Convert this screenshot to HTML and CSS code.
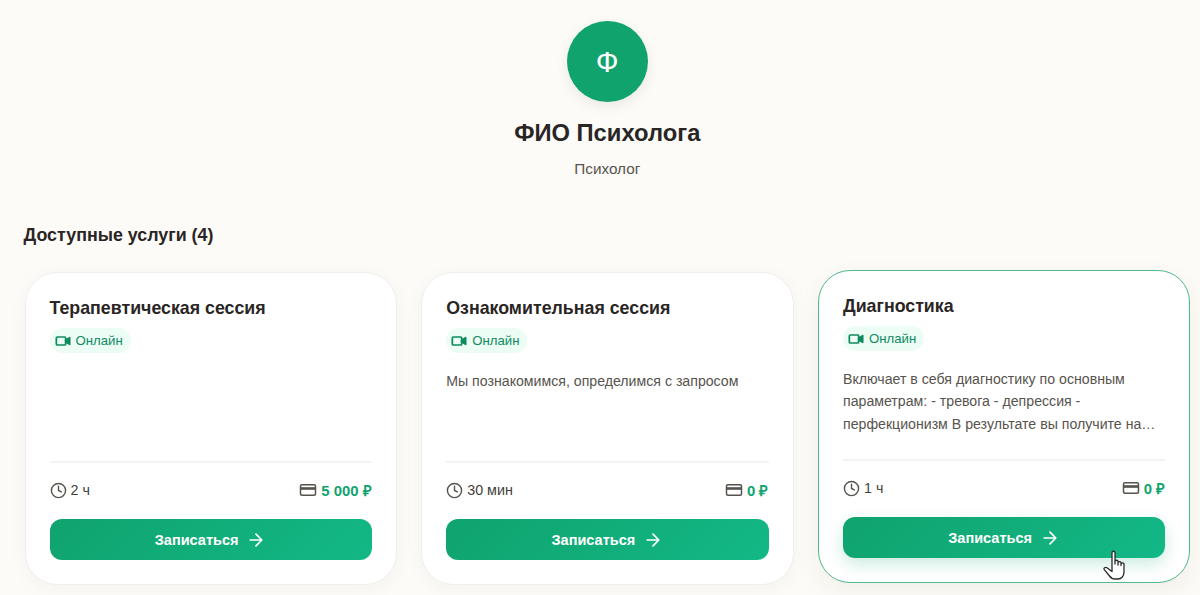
FILE: index.html
```html
<!DOCTYPE html>
<html lang="ru">
<head>
<meta charset="utf-8">
<title>ФИО Психолога</title>
<link rel="stylesheet" href="styles.css">
</head>
<body>
<main class="page">
  <header class="profile">
    <div class="avatar">Ф</div>
    <h1 class="name">ФИО Психолога</h1>
    <p class="role">Психолог</p>
  </header>
  <h2 class="section-title">Доступные услуги (4)</h2>
  <section class="grid">
    <article class="card">
      <h3 class="card-title">Терапевтическая сессия</h3>
      <span class="badge"><svg class="ico-video" viewBox="0 0 24 24" fill="none" stroke="currentColor" stroke-width="2.6"><rect x="2" y="6" width="14" height="12" rx="1.5"/><path d="M16 10.5 22 7v10l-6-3.5z" fill="currentColor" stroke-linejoin="round"/></svg>Онлайн</span>
      <p class="desc"></p>
      <div class="meta">
        <span class="meta-item"><svg class="ico" viewBox="0 0 24 24" fill="none" stroke="currentColor" stroke-width="2" stroke-linecap="round"><circle cx="12" cy="12" r="10"/><path d="M12 6v6l4 2"/></svg>2 ч</span>
        <span class="meta-item"><svg class="ico-card" viewBox="0 0 24 24" fill="none" stroke="currentColor" stroke-width="2"><rect x="2" y="5" width="20" height="14" rx="2"/><path d="M2 10h20" stroke-width="3.5"/></svg><b class="price">5 000 ₽</b></span>
      </div>
      <button class="btn">Записаться<svg class="ico-arrow" viewBox="0 0 24 24" fill="none" stroke="currentColor" stroke-width="2" stroke-linecap="round" stroke-linejoin="round"><path d="M5 12h14M12 5l7 7-7 7"/></svg></button>
    </article>
    <article class="card">
      <h3 class="card-title">Ознакомительная сессия</h3>
      <span class="badge"><svg class="ico-video" viewBox="0 0 24 24" fill="none" stroke="currentColor" stroke-width="2.6"><rect x="2" y="6" width="14" height="12" rx="1.5"/><path d="M16 10.5 22 7v10l-6-3.5z" fill="currentColor" stroke-linejoin="round"/></svg>Онлайн</span>
      <p class="desc">Мы познакомимся, определимся с запросом</p>
      <div class="meta">
        <span class="meta-item"><svg class="ico" viewBox="0 0 24 24" fill="none" stroke="currentColor" stroke-width="2" stroke-linecap="round"><circle cx="12" cy="12" r="10"/><path d="M12 6v6l4 2"/></svg>30 мин</span>
        <span class="meta-item"><svg class="ico-card" viewBox="0 0 24 24" fill="none" stroke="currentColor" stroke-width="2"><rect x="2" y="5" width="20" height="14" rx="2"/><path d="M2 10h20" stroke-width="3.5"/></svg><b class="price">0 ₽</b></span>
      </div>
      <button class="btn">Записаться<svg class="ico-arrow" viewBox="0 0 24 24" fill="none" stroke="currentColor" stroke-width="2" stroke-linecap="round" stroke-linejoin="round"><path d="M5 12h14M12 5l7 7-7 7"/></svg></button>
    </article>
    <article class="card card-hover">
      <h3 class="card-title">Диагностика</h3>
      <span class="badge"><svg class="ico-video" viewBox="0 0 24 24" fill="none" stroke="currentColor" stroke-width="2.6"><rect x="2" y="6" width="14" height="12" rx="1.5"/><path d="M16 10.5 22 7v10l-6-3.5z" fill="currentColor" stroke-linejoin="round"/></svg>Онлайн</span>
      <p class="desc">Включает в себя диагностику по основным параметрам: - тревога - депрессия - перфекционизм В результате вы получите на…</p>
      <div class="meta">
        <span class="meta-item"><svg class="ico" viewBox="0 0 24 24" fill="none" stroke="currentColor" stroke-width="2" stroke-linecap="round"><circle cx="12" cy="12" r="10"/><path d="M12 6v6l4 2"/></svg>1 ч</span>
        <span class="meta-item"><svg class="ico-card" viewBox="0 0 24 24" fill="none" stroke="currentColor" stroke-width="2"><rect x="2" y="5" width="20" height="14" rx="2"/><path d="M2 10h20" stroke-width="3.5"/></svg><b class="price">0 ₽</b></span>
      </div>
      <button class="btn btn-hover">Записаться<svg class="ico-arrow" viewBox="0 0 24 24" fill="none" stroke="currentColor" stroke-width="2" stroke-linecap="round" stroke-linejoin="round"><path d="M5 12h14M12 5l7 7-7 7"/></svg></button>
      <svg class="cursor" viewBox="0 0 24 30" fill="#fff" stroke="#2b2b2b" stroke-width="1.3" stroke-linejoin="round" stroke-linecap="round"><path d="M9 2.8c0-2.1 3-2.1 3 0V14V11.5c0-1.7 3-1.7 3 0V15V12.8c0-1.6 3-1.6 3 0V15.5V14c0-1.5 3-1.5 3 0V22c0 4-2.5 7-6 7h-3c-2.6 0-4-1-5.5-3L1.3 19.6c-1-1.5 1-3 2.6-1.8L9 21.5z"/></svg>
    </article>
  </section>
</main>
</body>
</html>
```
FILE: styles.css
```css
* { box-sizing: border-box; }
html, body { margin: 0; height: 595px; overflow: hidden; }
body {
  background: #fdfbf7;
  color: #292524;
  font-family: "Liberation Sans", Arial, sans-serif;
}
.page { padding: 21px 10px 0 24.5px; }
.profile { display: flex; flex-direction: column; align-items: center; }
.avatar {
  width: 81px; height: 81px; border-radius: 50%;
  background: #10a36e; color: #fff;
  display: flex; align-items: center; justify-content: center;
  font-size: 30px;
  box-shadow: 0 4px 14px rgba(0,0,0,.08);
}
.name { margin: 16px 0 0; font-size: 23.75px; line-height: 30px; font-weight: 700; }
.role { margin: 11px 0 0; font-size: 15.3px; line-height: 20px; color: #57534e; }
.section-title { margin: 44px 0 0 -1px; font-size: 17.85px; line-height: 24px; font-weight: 700; }
.grid { display: grid; grid-template-columns: repeat(3, 372.25px); column-gap: 24.5px; margin-top: 25px; }
.card {
  height: 313px; padding: 24px;
  background: #fff; border: 1px solid #f1efec; border-radius: 32px;
  box-shadow: 0 4px 20px rgba(60,50,30,.04);
  display: flex; flex-direction: column; align-items: flex-start; position: relative;
}
.card-hover { transform: translateY(-2px); border-color: #4fb98f; box-shadow: 0 8px 24px rgba(60,50,30,.06); }
.card-title { margin: 0; font-size: 17.8px; line-height: 22px; font-weight: 700; color: #292524; }
.badge {
  display: inline-flex; align-items: center; gap: 5px;
  margin-top: 9px; height: 25px; padding: 0 8px 0 5px;
  background: #ecfdf5; color: #0f8a60; border-radius: 13px;
  font-size: 13.2px;
}
.ico-video { width: 16px; height: 16px; flex: none; }
.desc {
  margin: 16.5px 0 0; flex: none; align-self: stretch; height: 69px;
  font-size: 14.15px; line-height: 22.6px; color: #57534e;
}
.meta {
  align-self: stretch; display: flex; justify-content: space-between; align-items: center;
  border-top: 2px solid #f5f4f2; padding-top: 8px; height: 47px; margin-top: auto;
  font-size: 14.3px; color: #44403c;
}
.meta-item { display: inline-flex; align-items: center; gap: 4px; }
.ico { width: 17px; height: 17px; flex: none; color: #57534e; margin-top: 1px; }
.ico-card { width: 18px; height: 18px; flex: none; color: #57534e; }
.price { color: #10a36e; font-weight: 700; font-size: 14.9px; }
.btn {
  align-self: stretch; height: 41px; margin-top: 11px;
  border: 0; border-radius: 12px; color: #fff;
  background: linear-gradient(135deg, #10a36e, #12b886);
  font: 700 14.5px "Liberation Sans", Arial, sans-serif;
  display: flex; align-items: center; justify-content: center; gap: 8px;
}
.btn-hover { box-shadow: 0 6px 16px rgba(16,163,110,.22); }
.ico-arrow { width: 20px; height: 20px; flex: none; }
.cursor { position: absolute; left: 283.5px; top: 279px; width: 24px; height: 30px; }
```
